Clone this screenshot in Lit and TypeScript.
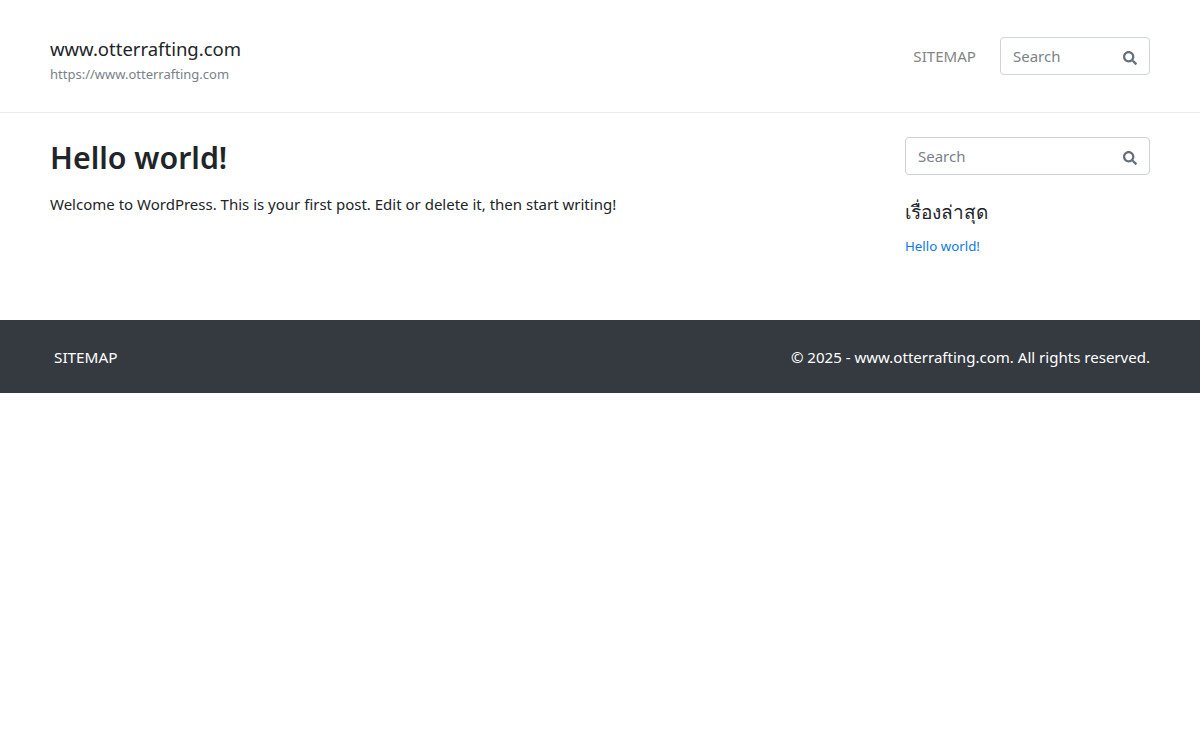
import { LitElement, html, css } from "lit";
import { customElement } from "lit/decorators.js";

const icon = html`<svg class="icon" viewBox="0 0 512 512" aria-hidden="true"><path fill="currentColor" d="M505 442.700L405.300 343c-4.500-4.500-10.600-7-17-7H372c27.600-35.300 44-79.700 44-128C416 93.100 322.900 0 208 0S0 93.100 0 208s93.100 208 208 208c48.300 0 92.700-16.400 128-44v16.300c0 6.400 2.500 12.500 7 17l99.700 99.700c9.400 9.400 24.600 9.400 33.900 0l28.300-28.300c9.400-9.400 9.400-24.600.1-34zM208 336c-70.700 0-128-57.200-128-128 0-70.700 57.200-128 128-128 70.700 0 128 57.200 128 128 0 70.700-57.200 128-128 128z"/></svg>`;

@customElement("app-root")
export class AppRoot extends LitElement {
  static styles = css`
    :host {
      display: block;
      font-family: "Noto Sans", "Noto Sans CJK SC", sans-serif;
      color: #212529;
      background: #fff;
      font-size: 15px;
      line-height: 24px;
    }
    a { text-decoration: none; }
    .header {
      height: 112px;
      border-bottom: 1px solid #e9ecef;
      padding: 0 50px;
      display: flex;
      align-items: center;
      justify-content: space-between;
    }
    .brand { display: flex; flex-direction: column; padding-top: 8px; }
    .title { font-size: 18.5px; line-height: 26px; color: #212529; }
    .tagline { font-size: 13px; line-height: 20px; margin-top: 2px; color: #7a8288; }
    .nav { display: flex; align-items: center; gap: 24px; }
    .nav a { color: #858585; font-size: 15.1px; }
    .search {
      box-sizing: border-box;
      height: 38px;
      border: 1px solid #ced4da;
      border-radius: 4px;
      display: flex;
      align-items: center;
      padding: 0 12px;
      background: #fff;
    }
    .search.small { width: 150px; }
    .search.wide { width: 245px; }
    .search input {
      flex: 1;
      min-width: 0;
      border: 0;
      outline: 0;
      padding: 0;
      font: inherit;
      color: #495057;
      background: transparent;
    }
    .search input::placeholder { color: #7a8289; opacity: 1; }
    .icon { width: 14px; height: 14px; color: #64707b; margin-top: 3px; }
    .main {
      padding: 24px 50px 0;
      height: 183px;
      display: flex;
      justify-content: space-between;
      align-items: flex-start;
    }
    h1 { margin: 0 0 13px; font-size: 30.3px; line-height: 42px; font-weight: 600; color: #212529; }
    p { margin: 0; }
    .side { width: 245px; display: flex; flex-direction: column; }
    h2 { margin: 23px 0 10px; font-size: 19px; line-height: 28px; font-weight: 500; color: #212529; }
    .side a { color: #0d7ae6; font-size: 13.3px; line-height: 20px; }
    .footer {
      height: 73px;
      background: #343a40;
      color: #fff;
      padding: 0 50px 0 54px;
      display: flex;
      align-items: center;
      justify-content: space-between;
    }
    .footer a { color: #fff; font-size: 15.3px; }
    .footer span { font-size: 15.05px; }
  `;

  render() {
    return html`
      <header class="header">
        <div class="brand">
          <a class="title" href="#">www.otterrafting.com</a>
          <span class="tagline">https://www.otterrafting.com</span>
        </div>
        <nav class="nav">
          <a href="#">SITEMAP</a>
          <label class="search small"><input placeholder="Search" />${icon}</label>
        </nav>
      </header>
      <main class="main">
        <article>
          <h1>Hello world!</h1>
          <p>Welcome to WordPress. This is your first post. Edit or delete it, then start writing!</p>
        </article>
        <aside class="side">
          <label class="search wide"><input placeholder="Search" />${icon}</label>
          <h2>เรื่องล่าสุด</h2>
          <a href="#">Hello world!</a>
        </aside>
      </main>
      <footer class="footer">
        <a href="#">SITEMAP</a>
        <span>© 2025 - www.otterrafting.com. All rights reserved.</span>
      </footer>
    `;
  }
}
